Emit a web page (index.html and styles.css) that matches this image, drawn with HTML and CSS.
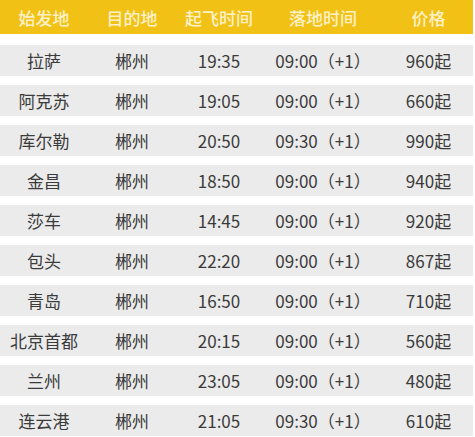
FILE: index.html
```html
<!DOCTYPE html>
<html lang="zh">
<head>
<meta charset="utf-8">
<link rel="stylesheet" href="styles.css">
</head>
<body>
<div class="table">
  <div class="row head">
    <span>始发地</span><span>目的地</span><span>起飞时间</span><span>落地时间</span><span>价格</span>
  </div>
  <div class="body">
    <div class="row"><span>拉萨</span><span>郴州</span><span>19:35</span><span>09:00（+1）</span><span>960起</span></div>
    <div class="row"><span>阿克苏</span><span>郴州</span><span>19:05</span><span>09:00（+1）</span><span>660起</span></div>
    <div class="row"><span>库尔勒</span><span>郴州</span><span>20:50</span><span>09:30（+1）</span><span>990起</span></div>
    <div class="row"><span>金昌</span><span>郴州</span><span>18:50</span><span>09:00（+1）</span><span>940起</span></div>
    <div class="row"><span>莎车</span><span>郴州</span><span>14:45</span><span>09:00（+1）</span><span>920起</span></div>
    <div class="row"><span>包头</span><span>郴州</span><span>22:20</span><span>09:00（+1）</span><span>867起</span></div>
    <div class="row"><span>青岛</span><span>郴州</span><span>16:50</span><span>09:00（+1）</span><span>710起</span></div>
    <div class="row"><span>北京首都</span><span>郴州</span><span>20:15</span><span>09:00（+1）</span><span>560起</span></div>
    <div class="row"><span>兰州</span><span>郴州</span><span>23:05</span><span>09:00（+1）</span><span>480起</span></div>
    <div class="row"><span>连云港</span><span>郴州</span><span>21:05</span><span>09:30（+1）</span><span>610起</span></div>
  </div>
</div>
</body>
</html>
```
FILE: styles.css
```css
html, body {
  margin: 0;
  padding: 0;
  background: #ffffff;
}
.table {
  width: 473px;
  display: flex;
  flex-direction: column;
  gap: 11px;
  font-family: "Noto Sans CJK SC", "Noto Sans", sans-serif;
  font-size: 17px;
  color: #3b3b3b;
}
.row {
  display: grid;
  grid-template-columns: 88px 88px 86px 122px 89px;
  align-items: center;
  height: 31px;
  background: #ebebeb;
}
.row span {
  text-align: center;
  white-space: nowrap;
  line-height: 1;
}
.head {
  height: 34px;
  background: #f2c116;
  color: #fdf1c8;
  font-weight: 500;
}
.body {
  display: flex;
  flex-direction: column;
  gap: 9px;
}
```
